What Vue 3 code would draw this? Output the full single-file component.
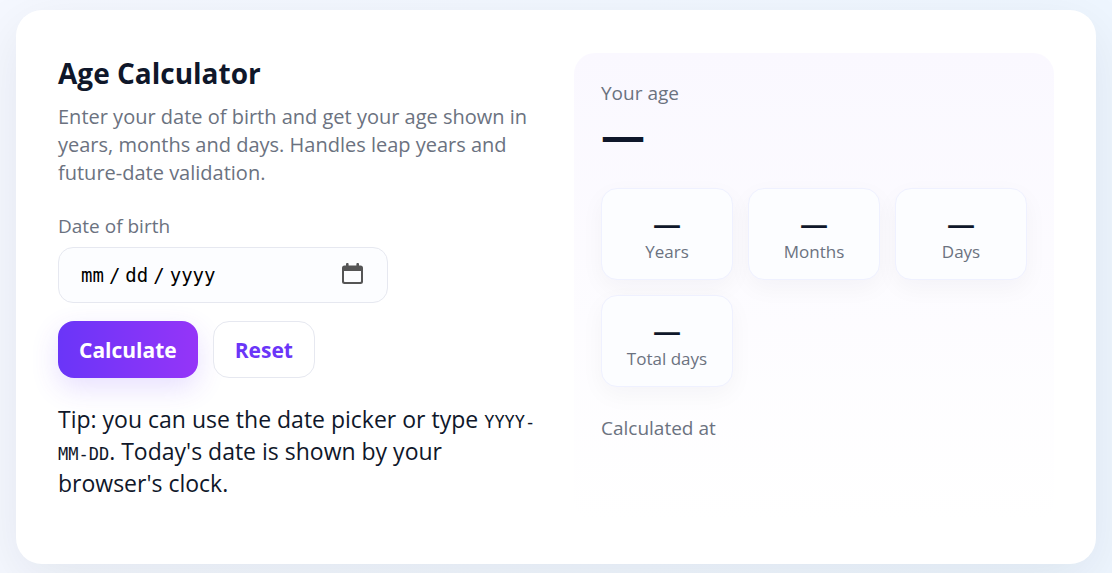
<script setup>
import { ref, computed } from 'vue'

const birth = ref('')
const result = ref(null)

const stats = computed(() => [
  { label: 'Years', value: result.value?.years ?? '—' },
  { label: 'Months', value: result.value?.months ?? '—' },
  { label: 'Days', value: result.value?.days ?? '—' },
  { label: 'Total days', value: result.value?.total ?? '—' }
])

const summary = computed(() =>
  result.value ? `${result.value.years}y ${result.value.months}m ${result.value.days}d` : '—'
)

function calculate() {
  if (!birth.value) return
  const [y, m, d] = birth.value.split('-').map(Number)
  const now = new Date()
  const start = new Date(y, m - 1, d)
  if (start > now) return
  let years = now.getFullYear() - y
  let months = now.getMonth() - (m - 1)
  let days = now.getDate() - d
  if (days < 0) {
    months -= 1
    days += new Date(now.getFullYear(), now.getMonth(), 0).getDate()
  }
  if (months < 0) {
    years -= 1
    months += 12
  }
  const total = Math.floor((now - start) / 86400000)
  result.value = { years, months, days, total, at: now.toLocaleString() }
}

function reset() {
  birth.value = ''
  result.value = null
}
</script>

<template>
  <main class="page">
    <section class="card">
      <form class="entry" @submit.prevent="calculate">
        <h1>Age Calculator</h1>
        <p class="lead">
          Enter your date of birth and get your age shown in years, months and days. Handles leap
          years and future-date validation.
        </p>
        <label for="dob">Date of birth</label>
        <input id="dob" v-model="birth" type="date" />
        <div class="actions">
          <button class="primary" type="submit">Calculate</button>
          <button class="ghost" type="button" @click="reset">Reset</button>
        </div>
        <p class="tip">
          Tip: you can use the date picker or type <code>YYYY-MM-DD</code>. Today's date is shown by
          your browser's clock.
        </p>
      </form>

      <section class="result" aria-live="polite">
        <div class="caption">Your age</div>
        <div class="summary">{{ summary }}</div>
        <div class="stats">
          <div v-for="s in stats" :key="s.label" class="stat">
            <div class="value">{{ s.value }}</div>
            <div class="name">{{ s.label }}</div>
          </div>
        </div>
        <div class="caption">Calculated at {{ result?.at }}</div>
      </section>
    </section>
  </main>
</template>

<style>
body {
  margin: 0;
}
</style>

<style scoped>
* {
  box-sizing: border-box;
}
.page {
  min-height: 100vh;
  padding: 10px 16px 9px;
  background: linear-gradient(90deg, #f5f8ff, #eef6ff);
  color: #0f172a;
  font-family: 'Segoe UI', 'Open Sans', 'Noto Sans', sans-serif;
  overflow: hidden;
}
.card {
  display: grid;
  grid-template-columns: minmax(0, 1fr) minmax(0, 1fr);
  gap: 36px;
  padding: 43px 42px 42px;
  border-radius: 26px;
  background: #fff;
  box-shadow: 0 16px 56px rgba(15, 23, 42, 0.08);
}
h1 {
  margin: 0 0 10px;
  font-size: 28px;
  line-height: 40px;
}
.lead {
  margin: 0 0 24px;
  color: #6b7280;
  font-size: 20px;
  line-height: 28px;
}
label {
  display: block;
  margin-bottom: 6px;
  color: #6b7280;
  font-size: 19px;
  line-height: 30px;
}
input {
  display: block;
  width: 330px;
  max-width: 100%;
  height: 56px;
  padding: 0 21px;
  border: 1px solid #e6e8f0;
  border-radius: 15px;
  background: #fcfdff;
  color: #000;
  font-family: 'DejaVu Sans Mono', monospace;
  font-size: 19px;
}
input::-webkit-datetime-edit-text {
  padding: 0 4px;
}
input::-webkit-calendar-picker-indicator {
  width: 24px;
  height: 24px;
  padding: 0;
  background-image: url("data:image/svg+xml,%3Csvg xmlns='http://www.w3.org/2000/svg' viewBox='0 0 24 24'%3E%3Cg fill='%23555'%3E%3Cpath fill-rule='evenodd' d='M2.500 2.500h16a2.500 2.500 0 0 1 2.500 2.500v13.500a2.500 2.500 0 0 1-2.500 2.500h-16a2.500 2.500 0 0 1-2.500-2.500V5a2.500 2.500 0 0 1 2.500-2.500zM2 8v10.200a.8.8 0 0 0 .8.8h15.400a.8.8 0 0 0 .8-.8V8z'/%3E%3Crect x='4' y='0' width='2.600' height='4' rx='1'/%3E%3Crect x='14.400' y='0' width='2.600' height='4' rx='1'/%3E%3C/g%3E%3C/svg%3E");
  background-size: 24px 24px;
}
.actions {
  display: flex;
  gap: 15px;
  margin: 18px 0 25px;
}
button {
  height: 57px;
  padding: 0 21px;
  border: 0;
  border-radius: 16px;
  font-family: inherit;
  font-size: 21px;
  font-weight: 700;
  cursor: pointer;
}
.primary {
  background: linear-gradient(90deg, #6a35f8, #9535f8);
  box-shadow: 0 10px 28px rgba(106, 53, 248, 0.16);
  color: #fff;
}
.ghost {
  border: 1px solid #e6e8f0;
  background: #fff;
  color: #6a35f8;
}
.tip {
  margin: 0 0 23px;
  font-size: 23px;
  line-height: 32px;
}
code {
  font-family: 'DejaVu Sans Mono', monospace;
  font-size: 17px;
  line-height: 1;
}
.result {
  padding: 27px;
  border-radius: 21px;
  background: linear-gradient(180deg, #faf8ff, #fff);
}
.caption {
  color: #6b7280;
  font-size: 19px;
  line-height: 26px;
}
.summary {
  margin: 1px 0 25px;
  font-size: 44px;
  font-weight: 700;
  line-height: 56px;
}
.stats {
  display: grid;
  grid-template-columns: repeat(3, minmax(0, 1fr));
  gap: 15px;
  margin-bottom: 28px;
}
.stat {
  height: 92px;
  padding: 18px 0;
  border: 1px solid #eff1ff;
  border-radius: 16px;
  background: #fcfdff;
  box-shadow: 0 8px 24px rgba(15, 23, 42, 0.04);
  text-align: center;
}
.value {
  font-size: 28px;
  font-weight: 600;
  line-height: 32px;
}
.name {
  color: #6b7280;
  font-size: 17px;
  line-height: 26px;
}
</style>
